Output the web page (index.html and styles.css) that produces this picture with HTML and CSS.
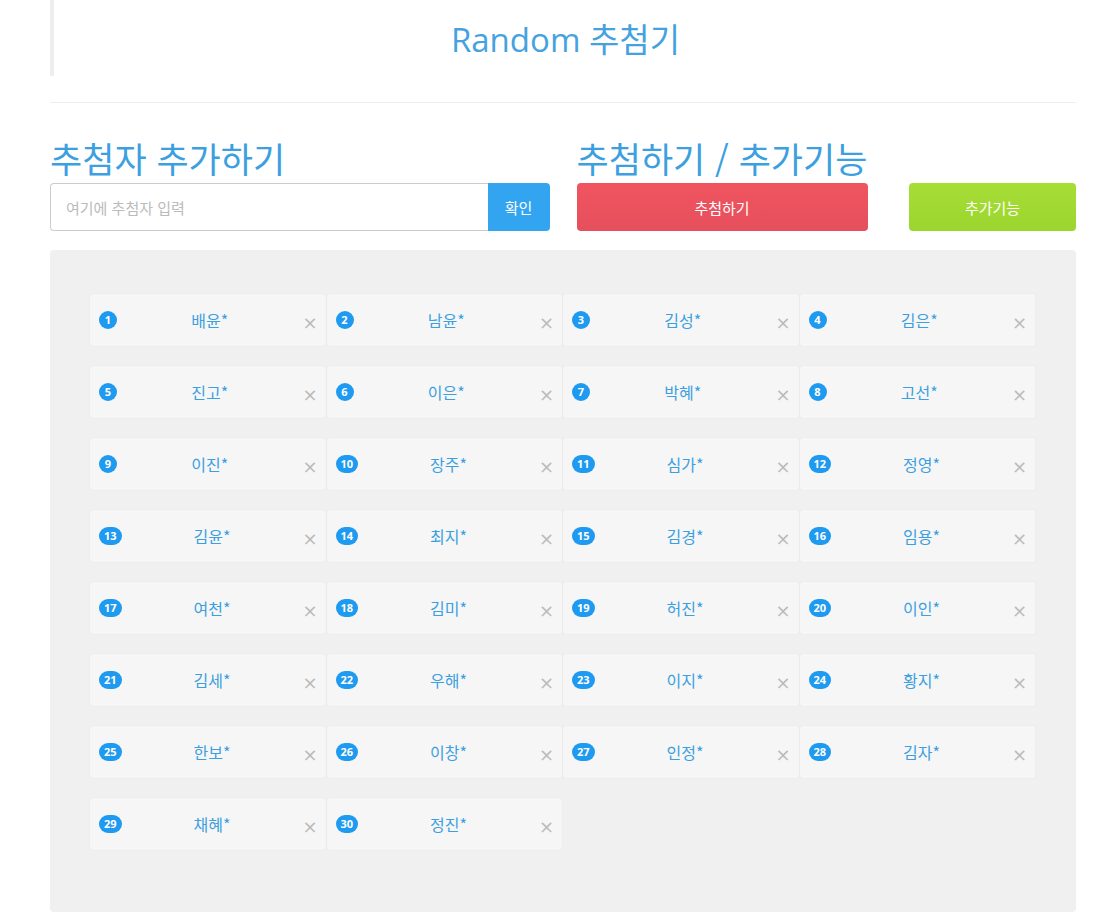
FILE: index.html
```html
<!DOCTYPE html>
<html lang="ko">

<head>
  <meta charset="UTF-8">
  <meta name="viewport" content="width=device-width, initial-scale=1.0">
  <title>Random 추첨기</title>
  <link rel="stylesheet" href="styles.css">
</head>

<body>

  <div id="container">
    <div class="header">
      <h1>Random 추첨기</h1>
    </div>
    <hr>

    <div class="controls">
      <div class="col">
        <h2>추첨자 추가하기</h2>
        <div class="addRow">
          <input type="text" placeholder="여기에 추첨자 입력">
          <button class="btnAdd">확인</button>
        </div>
      </div>
      <div class="col">
        <h2>추첨하기 / 추가기능</h2>
        <div class="actionRow">
          <button class="btnDraw">추첨하기</button>
          <button class="btnMore">추가기능</button>
        </div>
      </div>
    </div>

    <!-- list of people -->
    <div class="board">
      <div class="card"><span class="num">1</span><span class="name">배윤*</span><span class="del">×</span></div>
      <div class="card"><span class="num">2</span><span class="name">남윤*</span><span class="del">×</span></div>
      <div class="card"><span class="num">3</span><span class="name">김성*</span><span class="del">×</span></div>
      <div class="card"><span class="num">4</span><span class="name">김은*</span><span class="del">×</span></div>
      <div class="card"><span class="num">5</span><span class="name">진고*</span><span class="del">×</span></div>
      <div class="card"><span class="num">6</span><span class="name">이은*</span><span class="del">×</span></div>
      <div class="card"><span class="num">7</span><span class="name">박혜*</span><span class="del">×</span></div>
      <div class="card"><span class="num">8</span><span class="name">고선*</span><span class="del">×</span></div>
      <div class="card"><span class="num">9</span><span class="name">이진*</span><span class="del">×</span></div>
      <div class="card"><span class="num">10</span><span class="name">장주*</span><span class="del">×</span></div>
      <div class="card"><span class="num">11</span><span class="name">심가*</span><span class="del">×</span></div>
      <div class="card"><span class="num">12</span><span class="name">정영*</span><span class="del">×</span></div>
      <div class="card"><span class="num">13</span><span class="name">김윤*</span><span class="del">×</span></div>
      <div class="card"><span class="num">14</span><span class="name">최지*</span><span class="del">×</span></div>
      <div class="card"><span class="num">15</span><span class="name">김경*</span><span class="del">×</span></div>
      <div class="card"><span class="num">16</span><span class="name">임용*</span><span class="del">×</span></div>
      <div class="card"><span class="num">17</span><span class="name">여천*</span><span class="del">×</span></div>
      <div class="card"><span class="num">18</span><span class="name">김미*</span><span class="del">×</span></div>
      <div class="card"><span class="num">19</span><span class="name">허진*</span><span class="del">×</span></div>
      <div class="card"><span class="num">20</span><span class="name">이인*</span><span class="del">×</span></div>
      <div class="card"><span class="num">21</span><span class="name">김세*</span><span class="del">×</span></div>
      <div class="card"><span class="num">22</span><span class="name">우해*</span><span class="del">×</span></div>
      <div class="card"><span class="num">23</span><span class="name">이지*</span><span class="del">×</span></div>
      <div class="card"><span class="num">24</span><span class="name">황지*</span><span class="del">×</span></div>
      <div class="card"><span class="num">25</span><span class="name">한보*</span><span class="del">×</span></div>
      <div class="card"><span class="num">26</span><span class="name">이창*</span><span class="del">×</span></div>
      <div class="card"><span class="num">27</span><span class="name">인정*</span><span class="del">×</span></div>
      <div class="card"><span class="num">28</span><span class="name">김자*</span><span class="del">×</span></div>
      <div class="card"><span class="num">29</span><span class="name">채혜*</span><span class="del">×</span></div>
      <div class="card"><span class="num">30</span><span class="name">정진*</span><span class="del">×</span></div>
    </div>
  </div>

</body>

</html>
```

FILE: styles.css
```css
body {
  margin: 0;
  font-family: "Open Sans", "Noto Sans CJK KR", sans-serif;
  background-color: white;
  color: #333;
}

#container {
  width: 1026px;
  margin-left: 50px;
}

.header {
  border-left: 4px solid #eeeeee;
  height: 76px;
  display: flex;
  justify-content: center;
  align-items: center;
}

.header h1 {
  margin: 0;
  font-weight: 400;
  font-size: 33px;
  color: #45a2df;
  padding-left: 1px;
}

hr {
  border: 0;
  border-top: 1px solid #eeeeee;
  margin: 26px 0 0 0;
}

.controls {
  display: flex;
  gap: 27px;
  margin-top: 33px;
}

.col {
  width: 500px;
}

.col h2 {
  margin: 0 0 3px 0;
  font-weight: 400;
  font-size: 35px;
  line-height: 44px;
  color: #3c9fe0;
  font-family: "Noto Sans CJK KR", sans-serif;
}

.addRow {
  display: flex;
  height: 48px;
}

.addRow input {
  flex: 1;
  box-sizing: border-box;
  height: 48px;
  margin: 0;
  padding: 0 15px;
  font-size: 15px;
  font-family: "Noto Sans CJK KR", sans-serif;
  border: 1px solid #cccccc;
  border-right: 0;
  border-radius: 4px 0 0 4px;
  outline: none;
}

.addRow input::placeholder {
  color: #bbbbbb;
}

button {
  border: 0;
  margin: 0;
  height: 48px;
  color: white;
  font-size: 15px;
  font-family: "Noto Sans CJK KR", sans-serif;
  cursor: pointer;
}

.btnAdd {
  width: 62px;
  background-color: #33a4f0;
  border-radius: 0 4px 4px 0;
}

.actionRow {
  display: flex;
  justify-content: space-between;
}

.btnDraw {
  width: 291px;
  background: linear-gradient(#f0555f, #e64f5d);
  border-radius: 4px;
}

.btnMore {
  width: 167px;
  background: linear-gradient(#a6de36, #9cd52f);
  border-radius: 4px;
}

.board {
  margin-top: 19px;
  background-color: #f0f0f0;
  border-radius: 4px;
  padding: 44px 41px 62px 40px;
  display: grid;
  grid-template-columns: repeat(4, 1fr);
  column-gap: 1px;
  row-gap: 20px;
}

.card {
  display: flex;
  align-items: center;
  height: 52px;
  padding: 0 8px 0 9px;
  background-color: #f6f6f6;
  border-radius: 2px;
  box-shadow: 0 0 1px rgba(0, 0, 0, 0.12);
}

.num {
  min-width: 18px;
  height: 18px;
  padding: 0 5px;
  box-sizing: border-box;
  border-radius: 9px;
  background-color: #1e9af0;
  color: white;
  font-size: 11px;
  font-weight: 700;
  line-height: 18px;
  text-align: center;
  font-family: "Open Sans", sans-serif;
}

.name {
  flex: 1;
  text-align: center;
  color: #3c9fe0;
  font-size: 16px;
  font-family: "Noto Sans CJK KR", sans-serif;
}

.del {
  color: #bbbbbb;
  font-size: 18px;
  margin-top: 4px;
  font-family: "DejaVu Sans", sans-serif;
}
```
